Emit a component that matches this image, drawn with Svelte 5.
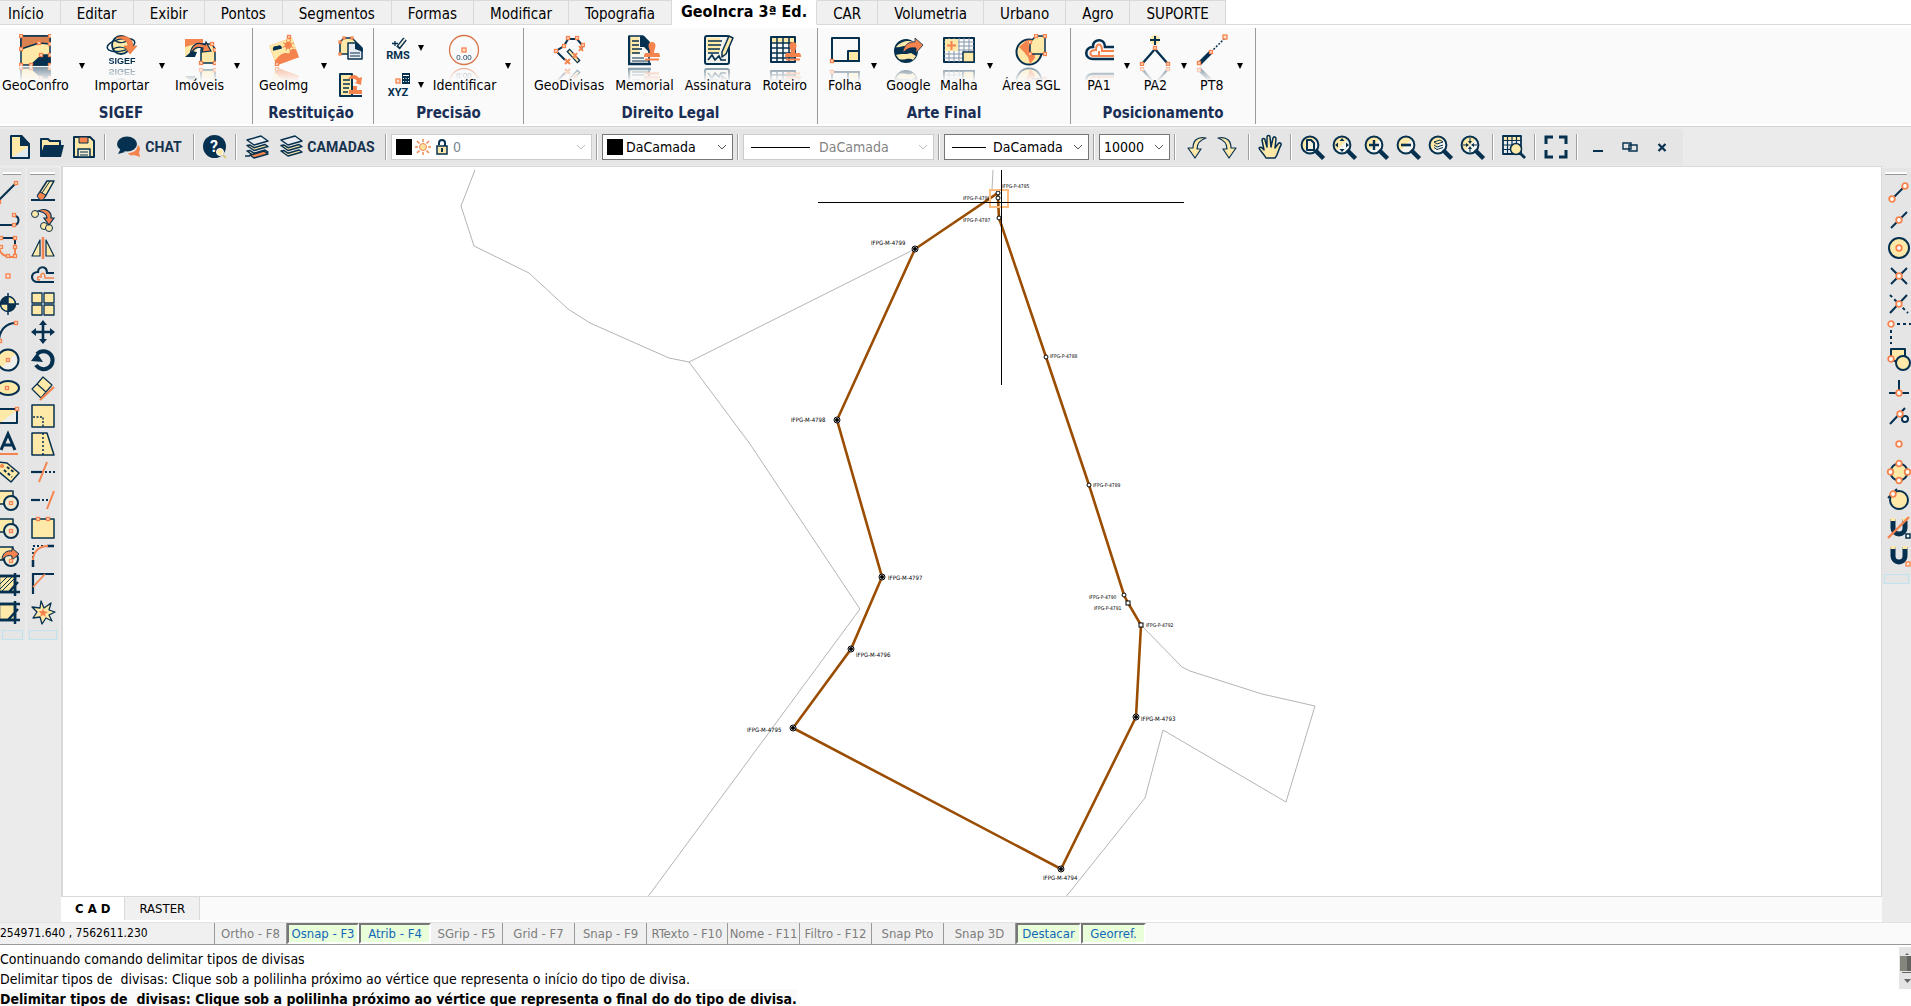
<script lang="ts">
    const navy = '#06304f';
    const cream = '#ffe9a8';
    const orange = '#f5834d';

    // Small square grip used on most of the drawing icons
    function node(x: number, y: number, size = 3) {
        return `<rect x="${x - size / 2}" y="${y - size / 2}" width="${size}" height="${size}" fill="#ffe3cf" stroke="${orange}" stroke-width="1.3"/>`;
    }

    // Round grip used on the snap icons
    function dot(x: number, y: number) {
        return `<circle cx="${x}" cy="${y}" r="2.8" fill="#fff" stroke="${orange}" stroke-width="1.8"/>`;
    }

    function line(d: string, color = navy, width = 2, extra = '') {
        return `<path d="${d}" fill="none" stroke="${color}" stroke-width="${width}" ${extra}/>`;
    }

    function shape(d: string, fill = cream, color = navy, width = 1.5) {
        return `<path d="${d}" fill="${fill}" stroke="${color}" stroke-width="${width}" stroke-linejoin="round"/>`;
    }

    function lens(inner: string) {
        return `<circle cx="10" cy="10" r="8.4" fill="${cream}"/><path d="M4 16A8.4 8.4 0 0 0 16 4z" fill="#f4f4f0"/><circle cx="10" cy="10" r="8.4" fill="none" stroke="${navy}" stroke-width="2"/>`
            + line('M16.5 16.5L22 22', navy, 4.4, 'stroke-linecap="square"') + inner;
    }

    const stamp = `<path d="M24 8a3.600 3.600 0 0 1 3.500 3.500c0 3-1.500 4-1.500 7.500H30q2 0 2 4H16q0-4 2-4h4c0-3.500-1.500-4.500-1.500-7.500A3.600 3.600 0 0 1 24 8z" fill="${orange}"/>` + line('M17 25.500h14', orange, 2);
    const layers = shape('M2 5l14-4 7 5-14 4z', '#e9edf2') + shape('M2 10.500l7 5 14-4-3-2-11 3.200-4-2.600z', cream) + shape('M2 16l7 5 14-4-3-2-11 3.200-4-2.600z', cream);
    const boxCircle = shape('M1 3h16v13H1z') + `<circle cx="15" cy="15" r="7" fill="#f1ead2" stroke="${navy}" stroke-width="2"/>`;
    const magnet = line('M6 3v9a6 6 0 0 0 12 0V3', navy, 5) + `<path d="M3.500 2h5v3h-5zM15.500 2h5v3h-5z" fill="${cream}"/>`;

    // 32 x 32 ribbon icons
    const big: Record<string, string> = {
        confro: shape('M2 2h29v29H2z') + shape('M2 2h29v8l-11-1L2 15z', '#d9824f') + shape('M12 31l11-10h8v10z', navy)
            + node(2, 2) + node(31, 2) + node(20, 9) + node(31, 10) + node(2, 15) + node(22, 21) + node(31, 21) + node(2, 31) + node(12, 31) + node(31, 31),
        sigef: `<circle cx="15" cy="11" r="9" fill="${cream}" stroke="${navy}" stroke-width="1.800"/>` + line('M8 6c5 4 12 3 14-1M7 15c5-3 12-2 15 1', navy, 1.2)
            + `<ellipse cx="15" cy="11" rx="14" ry="6" fill="none" stroke="${navy}" stroke-width="1.500" transform="rotate(-12 15 11)"/>`
            + `<path d="M10 4c8-4 17-1 17 8h4l-7 8-6-8h4c0-5-5-8-12-8z" fill="${orange}" stroke="#d66a35" stroke-width=".6"/>`
            + `<text x="16" y="30" text-anchor="middle" font-family="Liberation Sans, sans-serif" font-weight="bold" font-size="9" fill="${navy}">SIGEF</text>`,
        imoveis: `<path d="M1 5h18v5L8 16l-7 2z" fill="${orange}"/><path d="M1 13l10-3 3 4-6 9H1z" fill="${cream}"/><path d="M1 23l7-6 5 1-2 5z" fill="${navy}"/>`
            + shape('M19 10h9l3 5v14H17V16z', cream) + `<path d="M6 21C7 11 13 7 21 11l1-3 5 9-9 1 1-4c-6-2-9 0-13 7z" fill="${orange}" stroke="${navy}" stroke-width="1.200"/>` + node(17, 29) + node(31, 29) + node(28, 10) + node(31, 16),
        geoimg: `<g transform="rotate(-20 16 17)"><path d="M4 7h24v21H4z" fill="${orange}"/><path d="M4 7h24v13c-3-4-6-2-8 1-4-3-8-3-16 2z" fill="${cream}"/><circle cx="22" cy="13" r="3.500" fill="${orange}"/><path d="M22 7v12M16 13h12M18 9l8 8M26 9l-8 8" stroke="${orange}"/><path d="M6 13c0-4 3-4 5-3 3-1 5 1 4 4z" fill="${navy}"/></g>`
            + node(21, 3) + node(9, 30) + line('M22 6V3', orange, 1),
        identificar: `<circle cx="16" cy="16" r="14.500" fill="none" stroke="#d9774d" stroke-width="1.300"/>` + node(16, 16, 4)
            + `<text x="16" y="26" text-anchor="middle" font-family="Liberation Sans, sans-serif" font-size="8" fill="${navy}">0.00</text>`,
        divisas: line('M15 5h9l6 7-2 3M15 5l-4 7-8 5 9 9') + line('M15 16l11 12', navy, 4.5) + line('M16 17l9 10', cream, 2) + line('M26 12l4 5M30 12l-4 5M20 19l4 5M24 19l-4 5M12 25l5 5M17 25l-5 5', orange, 2)
            + node(15, 4) + node(24, 4) + node(3, 17) + node(11, 12) + node(30, 11),
        memorial: shape('M1 2h14l6 6v22H1z', '#f7f7f2') + `<path d="M2 3h9v17H2z" fill="${cream}"/><path d="M12 2h4l6 7v10l-6-6h-4z" fill="${navy}"/>` + line('M4 7h7M4 11h7M4 15h10M4 19h8', navy, 1.500) + line('M1 2v28h22', navy, 2.500) + line('M4 24h12M4 27h18', navy, 1) + stamp,
        assinatura: `<rect x="3" y="2" width="24" height="28" rx="2" fill="#f4f3ec" stroke="${navy}" stroke-width="2"/><path d="M5 4h13v14H5z" fill="${cream}"/>` + line('M6 7h14M6 11h13M6 15h12M6 19h11', navy, 1.500)
            + line('M6 26l4-5 3 5 4-4 2 4h5', navy, 1.700) + shape('M27 2l4 2-7 16-4 3v-5z'),
        roteiro: shape('M2 3h24v25H2z', '#f7f7f7', navy, 2) + `<path d="M3 4h22v5H3z" fill="${cream}"/>` + line('M2 9h24M2 14h24M2 19h24M2 24h24M8 3v25M14 3v25M20 3v25', navy, 1.500) + stamp,
        folha: shape('M3 4h27v23H3z', '#fafafa', navy, 2) + shape('M19 17h11v10H19z', cream, navy, 2) + node(3, 27),
        google: `<circle cx="14" cy="17" r="12" fill="${navy}"/><path d="M4 13c5-6 12-7 18-5l-6 4c-5-1-8 2-12 1zM4 21c5-2 9 0 15-2l5 3-3 4c-5-3-9 1-14-1z" fill="${cream}"/><path d="M11 19c0-8 7-12 12-11V4l8 7-7 8v-5c-6-1-10 1-13 5z" fill="${orange}" stroke="${navy}" stroke-width=".8"/>`,
        malha: shape('M1 4h30v24H1z', '#fafafa', navy, 2) + line('M6 4v24M11 4v24M16 4v24M21 4v24M26 4v24M1 8h30M1 12h30M1 16h30M1 20h30M1 24h30', '#8396ab', 1)
            + `<path d="M2 5h13v12H2z" fill="${cream}"/>` + line('M8.500 7v9M4 11.500h9', orange, 2) + shape('M20 18h11v10H20z'),
        area: `<circle cx="14" cy="18" r="12.500" fill="${cream}" stroke="${navy}" stroke-width="2"/><path d="M4 13l8-7 2 6 5 4 1 8-5 6-2-7-4-5z" fill="${orange}"/>` + shape('M15 8l6-6h9v18H15z') + node(15, 8) + node(21, 2) + node(30, 2) + node(30, 20) + node(15, 20),
        pa1: line('M31 13h-9c0-10-13-8-12 0-9 0-9 12 0 12h21', navy, 2.600) + line('M31 17H19c0-9-6-8-6-1-8 0-6 6-3 6h21M16 17v4', orange, 2),
        pa2: `<circle cx="16" cy="6" r="5" fill="${cream}"/>` + line('M16 2v9M11 6h10', navy, 2) + line('M3 30l13-15 13 15', navy, 2.300) + node(16, 14) + node(3, 30) + node(29, 30),
        pt8: line('M3 30l12-12', navy, 4) + line('M15 18L29 4', navy, 1.500, 'stroke-dasharray="2 1.500"') + node(3, 29) + node(15, 18) + node(29, 3, 4),
    };

    // 24 x 24 icons
    const small: Record<string, string> = {
        copyDoc: shape('M1 6l4-4h8l4 4v12H1z') + shape('M9 7h9l5 5v11H9z', '#e8edf2') + `<path d="M16 7h2l6 6v3l-8-3z" fill="${navy}"/>` + line('M11 17h10M11 20h10', navy, 1) + node(5, 2, 2) + node(13, 2, 2) + node(1, 18, 2) + node(1, 6, 2),
        stampDoc: shape('M1 1h12v22H1z', cream, navy, 2) + line('M1 23h22', navy, 2) + line('M4 7h7M4 11h7M4 15h6M4 19h5', navy, 1.500) + `<path d="M9 6c3-5 8-5 11-1l3-1-1 8-6-2 2-2c-2-3-5-2-9-2zM14 13h4v4h5v4H10v-4h4z" fill="${orange}"/>`,
        rms: line('M12 12l7-9', navy, 4.500) + line('M13 10.500l6-7.500', '#f5f0df', 2) + line('M6 7.500h6M9 5v5', navy, 1.300) + `<text x="12" y="23" text-anchor="middle" font-family="Roboto, sans-serif" font-weight="bold" font-size="11" fill="${navy}">RMS</text>`,
        xyz: node(12, 8, 4) + `<path d="M16 0h8v11h-8z" fill="${navy}"/><path d="M17 2h6v1h-6zM17 5h1v1h-1zM19.500 5h1v1h-1zM22 5h1v1h-1zM17 8h1v1h-1zM19.500 8h1v1h-1zM22 8h1v1h-1z" fill="#fff"/><text x="12" y="23" text-anchor="middle" font-family="Roboto, sans-serif" font-weight="bold" font-size="11" fill="${navy}">XYZ</text>`,
        newFile: shape('M3 1h10l8 8v14H3z', cream, navy, 2) + `<path d="M4 22L20 12v10z" fill="#dfe9ef"/><path d="M12 0h2l8 9v2H12z" fill="${navy}"/>`,
        open: shape('M1 21V4h7l2 2h10v4', cream, navy, 2) + `<path d="M0 22l4-12h20l-3 12z" fill="${navy}"/>`,
        save: shape('M2 2h16l4 4v16H2z', cream, navy, 2) + `<path d="M7 2h9v6H7z" fill="${orange}" stroke="${navy}"/>` + shape('M6 14h12v8H6z', '#f2ead0') + line('M8 17h8M8 20h8', navy, 1.200),
        chat: `<ellipse cx="10" cy="9" rx="10" ry="7.500" fill="${navy}"/><path d="M1 19l7-2-4-4z" fill="${navy}"/><path d="M21 10c3 3 2 6 1 7l1 5-6-2c-3 1-5 0-6-2 5 0 9-2 10-8z" fill="${orange}"/>`,
        help: `<circle cx="11.500" cy="11.500" r="11.500" fill="${navy}"/><text x="11" y="17" text-anchor="middle" font-family="Roboto, sans-serif" font-weight="bold" font-size="16" fill="#fff">?</text><circle cx="17" cy="17" r="3.500" fill="${cream}" stroke="#fff"/>` + line('M20 20l3 3', '#d9c77e', 2),
        layersOut: layers + shape('M5 20l4 3 14-4-4-3-10 3z', orange) + line('M0 21h5', navy, 1.500),
        layers,
        undo: shape('M22 3C12 1 9 7 9 13H4l7 10 6-9h-4c0-5 3-9 9-11z', cream, navy, 1.200),
        redo: shape('M2 3c10-2 13 4 13 10h5l-7 10-6-9h4c0-5-3-9-9-11z', cream, navy, 1.200),
        hand: shape('M8 23c-2-4-6-7-7-10 1-2 4 0 5 2L4 5c0-2 3-2 3 0l2 7V2c0-2 3-2 3 0l1 10 2-9c1-2 3-1 3 1l-1 9 3-4c1-2 4-1 3 1-3 5-3 10-6 13z'),
        zoomPage: lens(shape('M7 5h4l3 3v7H7z', '#f5f1df', navy, 2)),
        zoomExt: lens(`<path d="M10 3l2.500 3h-5zM10 17l2.500-3h-5zM3 10l3-2.500v5zM17 10l-3-2.500v5z" fill="${navy}"/>`),
        zoomIn: lens(line('M10 5v10M5 10h10', navy, 2.400)),
        zoomOut: lens(line('M5 10h10', navy, 2.600)),
        zoomLayer: lens(line('M6 7l6-2 3 2-6 2zM6 10l3 2 6-2M6 12.500l3 2 6-2', navy, 1)),
        zoomCenter: lens(`<path d="M10 9L8 6h1.500V3h1v3H12zM10 11l-2 3h1.500v3h1v-3H12zM9 10L6 8v1.500H3v1h3V12zM11 10l3-2v1.500h3v1h-3V12z" fill="${navy}"/>`),
        table: shape('M1 1h18v18H1z', '#edf0f0', navy, 1.800) + `<path d="M2 2h16v3H2z" fill="${cream}"/>` + line('M1 5.500h18M1 10h18M1 14.500h18M5.500 1v18M10 1v18M14.500 1v18', navy, 1.200) + `<circle cx="14" cy="14" r="5.500" fill="${cream}" stroke="${navy}" stroke-width="1.500"/>` + line('M18 18l5 5', navy, 2.800),
        full: line('M2 9V2h7M15 2h7v7M22 15v7h-7M9 22H2v-7', navy, 3),
        min: line('M7 16h10', navy, 2),
        restore: line('M5 8h8v6H5zM11 10h8v6h-8z', navy, 1.400),
        close: line('M8.500 9l7 7M15.500 9l-7 7', navy, 2.200),
        // left dock, draw
        dLine: line('M2 21L20 3') + node(3, 22) + node(20, 3),
        dPoly: line('M0 17h18c6-1 6-9 0-9') + node(18, 7) + node(18, 17),
        dArc4: line('M2 2h17v19') + line('M2 6c0 10 4 15 14 15h3M2 2v6M19 8v12', orange) + node(5, 2) + node(19, 2) + node(19, 11) + node(5, 11) + node(12, 20) + node(19, 20),
        dPoint: node(12, 12, 4),
        dTarget: `<circle cx="12" cy="12" r="7.500" fill="${cream}" stroke="${navy}" stroke-width="1.500"/><path d="M12 12V4.500A7.500 7.500 0 0 0 4.500 12zM12 12v7.500A7.500 7.500 0 0 0 19.500 12z" fill="${navy}"/>` + line('M12 1v22M1 12h22', navy, 1.500),
        dArc: line('M3 22C3 10 10 3 20 3') + node(4, 21) + node(20, 3),
        dCircle: `<circle cx="12" cy="12" r="10.500" fill="${cream}"/><path d="M20 5A10.500 10.500 0 0 1 5 20z" fill="#efefeb"/><circle cx="12" cy="12" r="10.500" fill="none" stroke="${navy}" stroke-width="2"/>` + node(12, 12),
        dEllipse: `<ellipse cx="12" cy="12" rx="11" ry="7" fill="${cream}" stroke="${navy}" stroke-width="2"/>` + node(11, 12),
        dRect: shape('M2 5h19v14H2z', cream, navy, 2) + `<path d="M20 7v11H5z" fill="#efefeb"/>` + node(21, 5) + node(2, 19),
        dText: line('M5 18L12 2l7 16M8 13h8', navy, 3) + line('M2 22h20', orange, 2),
        dTag: shape('M2 2l9 1 12 10-8 9L3 12z') + line('M8 10l8 7M11 7l8 6', navy, 2, 'stroke-dasharray="3 2"') + `<circle cx="6" cy="6" r="2" fill="${orange}"/>`,
        dBlock: boxCircle + node(15, 15),
        dBlockOut: boxCircle + `<path d="M6 16c0-7 5-10 10-9V4l7 6-7 6v-4c-4-1-7 0-10 4z" fill="${orange}" stroke="${navy}"/>` + node(15, 17),
        dHatch: shape('M3 4h16v16H3z', cream, navy, 2.500) + line('M4 12l8-8M4 17L17 4M6 19L19 6', navy, 1) + line('M13 20L22 10M1 4h23M1 20h23M19 1v23', navy, 2.500),
        dFill: shape('M3 4h16v16H3z', cream, navy, 2.500) + line('M12 20L22 9M1 4h23M1 20h23M19 1v23', navy, 2.500),
        // left dock, modify
        mErase: line('M0 20h24', navy, 2) + shape('M7 15L16 1h7l-9 16z') + line('M19 1L11 13', navy, 1) + `<path d="M6 16l3-4 6 3-3 5H9z" fill="${orange}" stroke="${navy}"/>`,
        mCopy: `<circle cx="4" cy="6" r="3.500" fill="${cream}" stroke="${navy}"/><circle cx="13" cy="18" r="3.500" fill="${cream}" stroke="${navy}"/><circle cx="18" cy="20" r="3.500" fill="${cream}" stroke="${navy}"/><path d="M7 3c8-4 14 1 13 7h3l-5 7-5-7h3c0-4-3-6-9-7z" fill="${orange}" stroke="${navy}" stroke-width="1.200"/>`,
        mMirror: shape('M9 4v16H1zM15 4v16h8z', cream, navy, 1.200) + line('M12 1v22', orange, 2.500),
        mOffset: line('M23 9h-7c0-8-9-7-9-1-8 0-8 10 0 10h16', navy, 2.200) + line('M23 14h-9c0-7-5-5-4-1-5-1-4 3-1 3', orange, 1.500),
        mArray: shape('M1 1h10v10H1zM13 1h10v10H13zM1 13h10v10H1zM13 13h10v10H13z', cream, navy, 1.300),
        mMove: line('M12 4v16M4 12h16', navy, 2.600) + `<path d="M12 0l4 5H8zM12 24l4-5H8zM0 12l5-4v8zM24 12l-5-4v8z" fill="${navy}"/>`,
        mRotate: line('M6 6a9 9 0 1 1-1 11', navy, 4) + `<path d="M0 13L6 5l6 9z" fill="${navy}"/>`,
        mAlign: shape('M6 8l6-7 9 8-6 7zM1 13l5-5 9 8-5 6z', cream, navy, 1.200) + line('M9 24L23 11', orange, 2.200),
        mScale: shape('M1 1h22v22H1z') + line('M2 13h10v10', navy, 1.500, 'stroke-dasharray="2 1.500"'),
        mStretch: shape('M1 1h15l7 22H1z') + line('M12 1v22', navy, 1.500, 'stroke-dasharray="2 2"'),
        mTrim: line('M0 12h12', navy, 2.200) + line('M14 12h10', navy, 2, 'stroke-dasharray="2 2"') + line('M8 22L16 2', orange, 2),
        mExtend: line('M0 12h9', navy, 2.200) + line('M11 12h8', navy, 2, 'stroke-dasharray="2 2"') + line('M16 21l7-18', orange, 2),
        mBreak: shape('M1 3h22v19H1z') + node(7, 3) + node(17, 3),
        mFillet: line('M2 23v-7M16 2h7', navy, 2.500) + line('M2 14V2h12', navy, 1.800, 'stroke-dasharray="2 2"') + line('M2 16C2 8 8 2 17 2', orange, 1.800),
        mChamfer: line('M2 22V2h21', navy, 2.200) + line('M2 15L14 2', orange, 1.800),
        mExplode: shape('M10 1l3 7 7-5-2 7 6 2-6 3 3 6-6-3-4 6-2-7-7 1 4-6-5-5 8 1z', cream, navy, 1.300) + `<path d="M12 8l1 3 4 1-3 2 1 3-3-2-3 2 1-3-2-3 3 0z" fill="${orange}"/>`,
        // right dock, snaps
        sEnd: line('M5 19L18 6') + dot(5, 19) + dot(18, 6),
        sMid: line('M4 20L20 4') + dot(12, 12),
        sCenter: `<circle cx="12" cy="12" r="10" fill="${cream}" stroke="${navy}" stroke-width="2"/>` + dot(12, 12),
        sInter: line('M4 4l16 16M20 4L4 20') + dot(12, 12),
        sAppar: line('M20 3L3 21') + line('M3 3l18 18', navy, 2, 'stroke-dasharray="3 3"') + dot(12, 12),
        sExt: line('M4 4v20M4 4h20', navy, 2, 'stroke-dasharray="3 3"') + dot(4, 4),
        sInsert: shape('M4 1h14v12H4z', cream, navy, 2) + `<circle cx="16" cy="15" r="7" fill="${cream}" stroke="${navy}" stroke-width="2"/>` + dot(4, 11),
        sPerp: line('M12 4v13M2 17h20') + dot(12, 17),
        sTan: line('M3 20L18 4') + `<circle cx="18" cy="15" r="3" fill="#fff" stroke="${navy}" stroke-width="2"/>` + dot(13, 10),
        sNode: dot(12, 12),
        sQuad: `<circle cx="12" cy="12" r="8.500" fill="${cream}" stroke="${navy}" stroke-width="2"/>` + dot(12, 3.5) + dot(12, 20.5) + dot(3.5, 12) + dot(20.5, 12),
        sNear: `<circle cx="12" cy="12" r="9" fill="${cream}" stroke="${navy}" stroke-width="2"/>` + line('M1 10l9-9') + dot(6, 6),
        sOff: magnet + line('M1 22L22 1', orange, 2.400) + `<rect x="19" y="18" width="4" height="4" fill="#fff" stroke="${navy}" stroke-width="1.500"/>`,
        sOn: magnet + node(21, 20, 4),
    };

    const menuTabs = ['Início', 'Editar', 'Exibir', 'Pontos', 'Segmentos', 'Formas', 'Modificar', 'Topografia',
        'GeoIncra 3ª Ed.', 'CAR', 'Volumetria', 'Urbano', 'Agro', 'SUPORTE'];
    let activeTab = $state('GeoIncra 3ª Ed.');

    // Items are either one large button or a stack of two small ones
    const ribbon = [
        { title: 'SIGEF', css: 'sigef', items: [
            { label: 'GeoConfro', icon: 'confro', menu: true },
            { label: 'Importar', icon: 'sigef', menu: true },
            { label: 'Imóveis', icon: 'imoveis', menu: true },
        ] },
        { title: 'Restituição', css: 'restituicao', items: [
            { label: 'GeoImg', icon: 'geoimg', menu: true },
            { stack: ['copyDoc', 'stampDoc'] },
        ] },
        { title: 'Precisão', css: 'precisao', items: [
            { stack: ['rms', 'xyz'], menu: true },
            { label: 'Identificar', icon: 'identificar', menu: true },
        ] },
        { title: 'Direito Legal', css: 'direito', items: [
            { label: 'GeoDivisas', icon: 'divisas' },
            { label: 'Memorial', icon: 'memorial' },
            { label: 'Assinatura', icon: 'assinatura' },
            { label: 'Roteiro', icon: 'roteiro' },
        ] },
        { title: 'Arte Final', css: 'arte', items: [
            { label: 'Folha', icon: 'folha', menu: true },
            { label: 'Google', icon: 'google' },
            { label: 'Malha', icon: 'malha', menu: true },
            { label: 'Área SGL', icon: 'area' },
        ] },
        { title: 'Posicionamento', css: 'posicao', items: [
            { label: 'PA1', icon: 'pa1', menu: true },
            { label: 'PA2', icon: 'pa2', menu: true },
            { label: 'PT8', icon: 'pt8', menu: true },
        ] },
    ] as any[];

    const drawTools = ['dLine', 'dPoly', 'dArc4', 'dPoint', 'dTarget', 'dArc', 'dCircle', 'dEllipse', 'dRect', 'dText', 'dTag', 'dBlock', 'dBlock', 'dBlockOut', 'dHatch', 'dFill'];
    const modifyTools = ['mErase', 'mCopy', 'mMirror', 'mOffset', 'mArray', 'mMove', 'mRotate', 'mAlign', 'mScale', 'mStretch', 'mTrim', 'mExtend', 'mBreak', 'mFillet', 'mChamfer', 'mExplode'];
    const snapTools = ['sEnd', 'sMid', 'sCenter', 'sInter', 'sAppar', 'sExt', 'sInsert', 'sPerp', 'sTan', 'sNode', 'sQuad', 'sNear', 'sOff', 'sOn'];
    const zoomTools = ['zoomPage', 'zoomExt', 'zoomIn', 'zoomOut', 'zoomLayer', 'zoomCenter'];

    let toggles = $state([
        { label: 'Ortho - F8', on: false, size: 'mid' },
        { label: 'Osnap - F3', on: true, size: 'mid' },
        { label: 'Atrib - F4', on: true, size: 'mid' },
        { label: 'SGrip - F5', on: false, size: 'mid' },
        { label: 'Grid - F7', on: false, size: 'mid' },
        { label: 'Snap - F9', on: false, size: 'mid' },
        { label: 'RTexto - F10', on: false, size: 'wide' },
        { label: 'Nome - F11', on: false, size: 'mid' },
        { label: 'Filtro - F12', on: false, size: 'mid' },
        { label: 'Snap Pto', on: false, size: 'mid' },
        { label: 'Snap 3D', on: false, size: 'mid' },
        { label: 'Destacar', on: true, size: 'slim' },
        { label: 'Georref.', on: true, size: 'slim' },
    ]);

    // Parcel vertices: position, label and where the label starts
    const vertices = [
        { x: 998, y: 193, name: 'IFPG-P-4785', lx: 1002, ly: 188 },
        { x: 998, y: 198, name: 'IFPG-P-4786', lx: 963, ly: 200 },
        { x: 999, y: 218, name: 'IFPG-P-4787', lx: 963, ly: 222 },
        { x: 1046, y: 357, name: 'IFPG-P-4788', lx: 1050, ly: 358 },
        { x: 1089, y: 485, name: 'IFPG-P-4789', lx: 1093, ly: 487 },
        { x: 1124, y: 595, name: 'IFPG-P-4790', lx: 1089, ly: 599 },
        { x: 1128, y: 603, name: 'IFPG-P-4791', lx: 1094, ly: 610, square: true },
        { x: 1141, y: 625, name: 'IFPG-P-4792', lx: 1146, ly: 627, square: true },
        { x: 1136, y: 717, name: 'IFPG-M-4793', lx: 1141, ly: 721, mark: true },
        { x: 1061, y: 869, name: 'IFPG-M-4794', lx: 1043, ly: 880, mark: true },
        { x: 793, y: 728, name: 'IFPG-M-4795', lx: 747, ly: 732, mark: true },
        { x: 851, y: 649, name: 'IFPG-M-4796', lx: 856, ly: 657, mark: true },
        { x: 882, y: 577, name: 'IFPG-M-4797', lx: 888, ly: 580, mark: true },
        { x: 837, y: 420, name: 'IFPG-M-4798', lx: 791, ly: 422, mark: true },
        { x: 915, y: 249, name: 'IFPG-M-4799', lx: 871, ly: 245, mark: true },
    ];
    const parcel = vertices.map((v) => `${v.x},${v.y}`).join(' ');
</script>

{#snippet icon(name: string)}
    <svg class="icon" viewBox="0 0 24 24" aria-hidden="true">{@html small[name]}</svg>
{/snippet}

{#snippet tool(name: string)}
    <button class="tool" aria-label={name}>{@render icon(name)}</button>
{/snippet}

{#snippet chevron()}
    <svg class="chevron" viewBox="0 0 10 6" aria-hidden="true"><path d="M1 1l4 4 4-4" fill="none" stroke="currentColor" /></svg>
{/snippet}

<div class="shell">
    <!-- Menu tabs -->
    <nav class="menu">
        {#each menuTabs as tab}
            <button class="menu-tab" class:active={activeTab === tab} onclick={() => (activeTab = tab)}>{tab}</button>
        {/each}
    </nav>

    <!-- Ribbon -->
    <div class="ribbon">
        <div class="groups">
            {#each ribbon as group}
                <section class="group {group.css}">
                    <div class="group-items">
                        {#each group.items as item}
                            {#if item.stack}
                                <div class="stack">
                                    {#each item.stack as name}
                                        <div class="stack-row">
                                            <button class="mini" aria-label={name}>{@render icon(name)}</button>
                                            {#if item.menu}<button class="drop" aria-label="Opções {name}"></button>{/if}
                                        </div>
                                    {/each}
                                </div>
                            {:else}
                                <button class="big">
                                    <svg class="big-icon" viewBox="0 0 32 32" aria-hidden="true">{@html big[item.icon]}</svg>
                                    <span>{item.label}</span>
                                </button>
                                {#if item.menu}<button class="drop" aria-label="Opções {item.label}"></button>{/if}
                            {/if}
                        {/each}
                    </div>
                    <h2>{group.title}</h2>
                </section>
            {/each}
        </div>
    </div>

    <!-- Quick toolbar -->
    <div class="toolbar">
        <div class="toolbar-inner">
            {@render tool('newFile')}
            {@render tool('open')}
            {@render tool('save')}
            <i class="sep"></i>
            <button class="tool chat">{@render icon('chat')}<span>CHAT</span></button>
            <i class="sep"></i>
            {@render tool('help')}
            <i class="sep"></i>
            {@render tool('layersOut')}
            <button class="tool camadas">{@render icon('layers')}<span>CAMADAS</span></button>
            <i class="sep"></i>
            <label class="combo layer disabled">
                <i class="swatch"></i>
                <svg class="state" viewBox="0 0 16 16" aria-hidden="true">
                    <circle cx="8" cy="8" r="3.500" fill="#ffe0a0" stroke="#f08a50" />
                    <path d="M8 0v3M8 13v3M0 8h3M13 8h3M2 2l2.500 2.500M11.500 11.500L14 14M14 2l-2.500 2.500M4.500 11.500L2 14" stroke="#f08a50" stroke-width="1.500" />
                </svg>
                <svg class="state" viewBox="0 0 16 16" aria-hidden="true">
                    <path d="M5 6V4a3 3 0 0 1 6 0v4" fill="none" stroke="#06304f" stroke-width="2" />
                    <path d="M3 7h10v8H3z" fill="#ffe9a8" stroke="#06304f" stroke-width="1.500" />
                    <path d="M8 9v4" stroke="#06304f" stroke-width="2" />
                </svg>
                <select aria-label="Camada" disabled><option>0</option></select>
                {@render chevron()}
            </label>
            <i class="sep"></i>
            <label class="combo color">
                <i class="swatch"></i>
                <select aria-label="Cor"><option>DaCamada</option></select>
                {@render chevron()}
            </label>
            <i class="sep"></i>
            <label class="combo linetype disabled">
                <i class="stroke long"></i>
                <select aria-label="Tipo de linha" disabled><option>DaCamada</option></select>
                {@render chevron()}
            </label>
            <i class="sep"></i>
            <label class="combo weight">
                <i class="stroke"></i>
                <select aria-label="Espessura"><option>DaCamada</option></select>
                {@render chevron()}
            </label>
            <i class="sep"></i>
            <label class="combo scale">
                <select aria-label="Escala"><option>10000</option></select>
                {@render chevron()}
            </label>
            <i class="sep"></i>
            {@render tool('undo')}
            {@render tool('redo')}
            <i class="sep"></i>
            {@render tool('hand')}
            <i class="sep"></i>
            {#each zoomTools as name}
                {@render tool(name)}
            {/each}
            <i class="sep"></i>
            {@render tool('table')}
            <i class="sep"></i>
            {@render tool('full')}
            <i class="sep"></i>
            {@render tool('min')}
            {@render tool('restore')}
            {@render tool('close')}
        </div>
    </div>

    <!-- Docks and drawing area -->
    <main>
        <div class="dock draw">
            {#each drawTools as name}{@render tool(name)}{/each}
            <i class="dock-end"></i>
        </div>
        <div class="dock modify">
            {#each modifyTools as name}{@render tool(name)}{/each}
            <i class="dock-end"></i>
        </div>

        <div class="work">
            <div class="canvas">
                <svg class="drawing" role="img" aria-label="Planta do imóvel">
                    <g transform="translate(-63 -167)">
                        <g class="neighbours">
                            <polyline points="475,170 461,206 474,246 529,273 568,309 590,323 669,358 689,362 915,249" />
                            <polyline points="689,362 750,444 860,609 647,898" />
                            <polyline points="1141,625 1182,667 1190,671 1262,694 1315,706 1286,802 1163,730 1145,798 1065,898" />
                            <polyline points="993,170 992,190" />
                        </g>
                        <polygon class="parcel" points={parcel} />
                        {#each vertices as v}
                            {#if v.square}
                                <rect class="vertex" x={v.x - 2} y={v.y - 2} width="4" height="4" />
                            {:else}
                                <circle class="vertex" cx={v.x} cy={v.y} r={v.mark ? 3 : 2} />
                            {/if}
                            {#if v.mark}<circle cx={v.x} cy={v.y} r="2" />{/if}
                            <text class={v.mark ? 'mark-label' : 'point-label'} x={v.lx} y={v.ly}>{v.name}</text>
                        {/each}
                        <rect class="pick" x="990" y="190" width="18" height="17" />
                        <path class="cursor" d="M818 202.500H1184M1001.500 170V385" />
                    </g>
                </svg>
            </div>
            <div class="doc-tabs">
                <button class="doc-tab active">C A D</button>
                <button class="doc-tab">RASTER</button>
            </div>
        </div>

        <div class="dock snap">
            {#each snapTools as name}{@render tool(name)}{/each}
            <i class="dock-end"></i>
        </div>
    </main>

    <!-- Status bar -->
    <div class="status">
        <output>254971.640 , 7562611.230</output>
        {#each toggles as t}
            <button class="toggle {t.size}" class:on={t.on} aria-pressed={t.on} onclick={() => (t.on = !t.on)}>{t.label}</button>
        {/each}
    </div>

    <!-- Command history -->
    <div class="console">
        <div class="history">
            <p>Continuando comando delimitar tipos de divisas</p>
            <p>Delimitar tipos de&nbsp; divisas: Clique sob a polilinha próximo ao vértice que representa o início do tipo de divisa.</p>
            <p class="prompt">Delimitar tipos de&nbsp; divisas: Clique sob a polilinha próximo ao vértice que representa o final do do tipo de divisa.</p>
        </div>
        <div class="scroll">
            <svg viewBox="0 0 12 42" aria-hidden="true">
                <path d="M8 6l2 2H6z" fill="#666" />
                <path d="M1 9h11v15H1z" fill="#85857d" />
                <path d="M8 9h4v15H8z" fill="#62625e" />
                <path d="M3 25.500h9" stroke="#666" />
                <path d="M5 32h7l-3.500 4z" fill="#666" />
            </svg>
        </div>
    </div>
</div>

<style>
    :global(body) {
        overflow: hidden;
    }

    .shell {
        display: flex;
        flex-direction: column;
        height: 100vh;
        background: #fff;
        color: #000;
        font-family: "DejaVu Sans Condensed", "Noto Sans", sans-serif;
        font-size: 14px;
    }

    button,
    select {
        margin: 0;
        padding: 0;
        border: 0;
        background: none;
        color: inherit;
        font: inherit;
    }

    svg {
        display: block;
        flex: none;
    }

    .icon {
        width: 24px;
        height: 24px;
        overflow: visible;
    }

    /* Menu tabs */
    .menu {
        display: flex;
        height: 25px;
        box-sizing: border-box;
        flex: none;
        background: linear-gradient(#d9d9d9, #d9d9d9) bottom / 100% 1px no-repeat;
    }

    .menu-tab {
        padding: 2px 16px 0;
        border: 1px solid #d9d9d9;
        border-left: 0;
        background: #f0f0f0;
        font-size: 15px;
        white-space: nowrap;
    }

    .menu-tab:first-child {
        padding-left: 8px;
    }

    .menu-tab.active {
        padding: 0 9px 2px;
        border-color: transparent #d9d9d9 transparent transparent;
        background: #fff;
        font-size: 16px;
        font-weight: bold;
    }

    /* Ribbon */
    .ribbon {
        flex: none;
        padding: 3px 0 2px;
        border-bottom: 1px solid #d4d4d4;
    }

    .groups {
        display: flex;
        height: 96px;
        background: #fafafa;
    }

    .group {
        display: flex;
        flex-direction: column;
        box-sizing: border-box;
        flex: none;
        padding: 0 10px;
        border-right: 1px solid #999;
    }

    .sigef {
        width: 253px;
        padding: 0 12px 0 2px;
    }

    .restituicao {
        width: 121px;
        padding: 0 10px 0 6px;
    }

    .precisao {
        width: 150px;
        padding: 0 12px;
    }

    .direito {
        width: 294px;
    }

    .arte {
        width: 253px;
    }

    .posicao {
        width: 185px;
        padding: 0 12px;
    }

    .group-items {
        display: flex;
        flex: 1;
        justify-content: space-between;
    }

    .group h2 {
        margin: 0;
        color: #1a2f55;
        font-size: 15px;
        line-height: 22px;
        text-align: center;
    }

    .big {
        display: flex;
        flex-direction: column;
        align-items: center;
        gap: 10px;
        padding-top: 6px;
        line-height: 18px;
        white-space: nowrap;
    }

    .big span {
        position: relative;
    }

    .big-icon {
        width: 32px;
        height: 32px;
        -webkit-box-reflect: below 1px linear-gradient(transparent 55%, rgba(0, 0, 0, 0.5));
    }

    .drop {
        align-self: flex-start;
        margin-top: 35px;
        border: 3px solid transparent;
        border-top: 6px solid #000;
        border-bottom: 0;
    }

    .stack {
        display: flex;
        flex-direction: column;
        gap: 13px;
        padding-top: 8px;
    }

    .stack-row {
        display: flex;
        gap: 8px;
    }

    .stack-row .drop {
        margin-top: 9px;
    }

    /* Quick toolbar */
    .toolbar {
        flex: none;
        height: 39px;
        background: #ebebeb;
    }

    .toolbar-inner {
        display: flex;
        align-items: center;
        width: max-content;
        height: 36px;
        margin-top: 2px;
        padding: 0 5px 0 4px;
        background: #e5e5e5;
    }

    .tool {
        display: flex;
        align-items: center;
        justify-content: center;
        flex: none;
        width: 32px;
        height: 28px;
    }

    .chat span,
    .camadas span {
        color: #16334f;
        font-family: Roboto, sans-serif;
        font-size: 14px;
        font-weight: bold;
    }

    .tool.chat {
        gap: 4px;
        width: 79px;
    }

    .tool.camadas {
        gap: 4px;
        width: 108px;
    }

    .sep {
        width: 1px;
        height: 26px;
        margin: 0 4px;
        border-right: 1px solid #fff;
        background: #a0a0a0;
    }

    .combo {
        display: flex;
        align-items: center;
        box-sizing: border-box;
        height: 26px;
        padding: 0 5px 0 4px;
        border: 1px solid #777;
        background: #fff;
    }

    .combo.disabled {
        border-color: #ccc;
        color: #838383;
    }

    .combo select {
        flex: 1;
        min-width: 0;
        padding-left: 3px;
        appearance: none;
        opacity: 1;
        outline: 0;
    }

    .layer {
        width: 201px;
    }

    .layer select {
        color: #7a8794;
    }

    .color {
        width: 131px;
    }

    .linetype {
        width: 191px;
    }

    .weight {
        width: 145px;
    }

    .scale {
        width: 71px;
    }

    .scale select {
        padding: 0;
    }

    .swatch {
        width: 16px;
        height: 16px;
        background: #000;
    }

    .state {
        width: 16px;
        height: 16px;
        margin-left: 3px;
    }

    .stroke {
        width: 34px;
        height: 1px;
        margin: 0 4px 0 3px;
        background: #000;
    }

    .stroke.long {
        width: 59px;
        margin-right: 6px;
    }

    .chevron {
        width: 10px;
        height: 6px;
        color: #555;
    }

    .disabled .chevron {
        color: #bbb;
    }

    /* Docks */
    main {
        display: flex;
        flex: 1;
        min-height: 0;
        background: #ebebeb;
    }

    .dock {
        position: relative;
        display: flex;
        flex-direction: column;
        align-items: center;
        align-self: flex-start;
        box-sizing: border-box;
        flex: none;
        margin-top: 2px;
        padding-top: 10px;
        overflow: hidden;
        background: #e5e5e5;
    }

    .dock::before {
        position: absolute;
        top: 4px;
        right: 4px;
        left: 3px;
        height: 2px;
        border-bottom: 1px solid #999;
        background: #fff;
        content: "";
    }

    .draw {
        align-items: flex-end;
        width: 25px;
    }

    .draw .tool {
        width: 34px;
    }

    .modify {
        width: 32px;
        margin-right: 2px;
        margin-left: 2px;
    }

    .snap {
        align-items: flex-end;
        width: 29px;
    }

    .snap .tool {
        width: 24px;
    }

    .dock-end {
        align-self: stretch;
        height: 8px;
        margin: 4px 2px 0;
        border: 1px solid #bfe4ef;
    }

    /* Drawing area */
    .work {
        display: flex;
        flex: 1;
        flex-direction: column;
        min-width: 0;
    }

    .canvas {
        flex: 1;
        min-height: 0;
        border: 2px solid #d9d9d9;
        border-width: 1px 1px 1px 2px;
        background: #fff;
    }

    .drawing {
        width: 100%;
        height: 100%;
    }

    .neighbours polyline {
        fill: none;
        stroke: #b4b4b4;
        stroke-width: 1;
    }

    .parcel {
        fill: none;
        stroke: #9a4d00;
        stroke-width: 2.6;
    }

    .vertex {
        fill: #fff;
        stroke: #000;
    }

    .mark-label {
        font-size: 6px;
    }

    .point-label {
        font-size: 5px;
    }

    .pick {
        fill: none;
        stroke: #ffbe80;
        stroke-width: 2;
    }

    .cursor {
        stroke: #000;
        stroke-width: 1;
    }

    .doc-tabs {
        display: flex;
        box-sizing: border-box;
        flex: none;
        height: 25px;
        border-bottom: 2px solid #fff;
        background: #fafafa;
    }

    .doc-tab {
        padding: 0 14px;
        border-right: 1px solid #d9d9d9;
        background: #f0f0f0;
        font-size: 13px;
    }

    .doc-tab.active {
        background: #fff;
        font-weight: bold;
    }

    /* Status bar */
    .status {
        display: flex;
        flex: none;
        height: 23px;
        border-top: 1px solid #e3e3e3;
        border-bottom: 1px solid #999;
        box-sizing: border-box;
        background: #fafafa;
        font-size: 13px;
    }

    .status output {
        box-sizing: border-box;
        width: 215px;
        border-right: 1px solid #999;
        background: #f0f0f0;
        font-size: 12px;
        line-height: 21px;
        white-space: nowrap;
    }

    .toggle {
        box-sizing: border-box;
        width: 72px;
        border-right: 1px solid #999;
        background: #f0f0f0;
        color: #7d7d7d;
        white-space: nowrap;
    }

    .toggle.wide {
        width: 81px;
    }

    .toggle.slim {
        width: 65px;
    }

    .toggle.on {
        border: 2px solid #fff;
        border-top-color: #777;
        border-left-color: #777;
        background: #e8ffda;
        color: #1467b8;
    }

    /* Command history */
    .console {
        display: flex;
        flex: none;
        height: 61px;
        overflow: hidden;
    }

    .history {
        flex: 1;
        padding-top: 4px;
    }

    .history p {
        margin: 0;
        line-height: 20px;
        white-space: nowrap;
    }

    .history .prompt {
        width: max-content;
        background: #fafafa;
        font-weight: bold;
    }

    .scroll {
        width: 12px;
        height: 42px;
        margin-top: 2px;
        background: #e4e4e4;
    }
</style>
